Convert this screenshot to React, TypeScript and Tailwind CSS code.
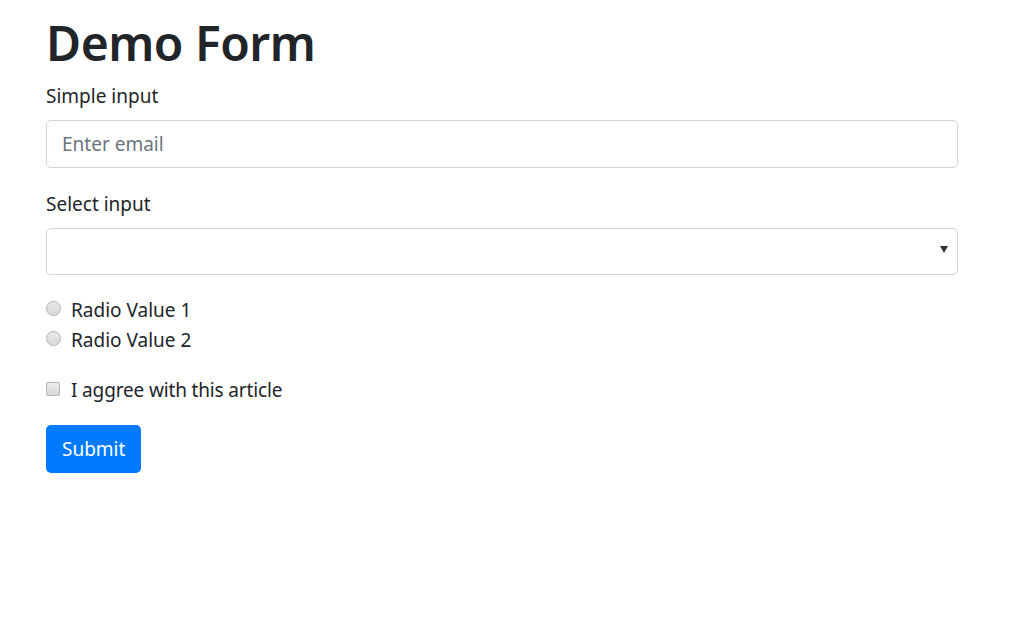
export default function App() {
  const font = { fontFamily: '"Noto Sans", "Open Sans", sans-serif' }
  return (
    <div className="min-h-[630px] bg-white text-[#212529]" style={font}>
      <div className="w-[912px] ml-[46px]">
        <h1 className="text-[48px] leading-[60px] font-semibold pt-[13px] mb-[7px] tracking-[-0.5px]">Demo Form</h1>

        <div className="mb-[20px]">
          <label className="block text-[19px] leading-[30px] pt-[1px] mb-[9px]">Simple input</label>
          <input
            placeholder="Enter email"
            className="w-full h-[48px] px-[15px] border border-[#ced4da] rounded-[5px] text-[19px] placeholder:text-[#6c757d] outline-none"
          />
        </div>

        <div className="mb-[20px]">
          <label className="block text-[19px] leading-[30px] pt-[1px] mb-[9px]">Select input</label>
          <div className="relative w-full h-[47px] border border-[#ced4da] rounded-[5px]">
            <span className="absolute right-[9px] top-[17px] w-0 h-0 border-l-[4px] border-r-[4px] border-t-[7px] border-l-transparent border-r-transparent border-t-[#333]" />
          </div>
        </div>

        <div className="mb-[20px]">
          {['Radio Value 1', 'Radio Value 2'].map(v => (
            <div key={v} className="flex items-center h-[30px] text-[19px] pt-[1px]">
              <span className="w-[15px] h-[15px] -mt-[4px] rounded-full border border-[#b4b4b4] bg-gradient-to-b from-[#e9e9e9] to-[#d8d8d8] mr-[10px]" />
              <span>{v}</span>
            </div>
          ))}
        </div>

        <div className="mb-[20px]">
          <div className="flex items-center h-[30px] text-[19px] pt-[1px] tracking-[-0.15px]">
            <span className="w-[14px] h-[14px] -mt-[4px] rounded-[2px] border border-[#b4b4b4] bg-gradient-to-b from-[#ededed] to-[#d6d6d6] mr-[11px]" />
            <span>I aggree with this article</span>
          </div>
        </div>

        <button className="h-[48px] px-[16px] bg-[#007bff] text-white rounded-[5px] text-[19px]">Submit</button>
      </div>
    </div>
  )
}
